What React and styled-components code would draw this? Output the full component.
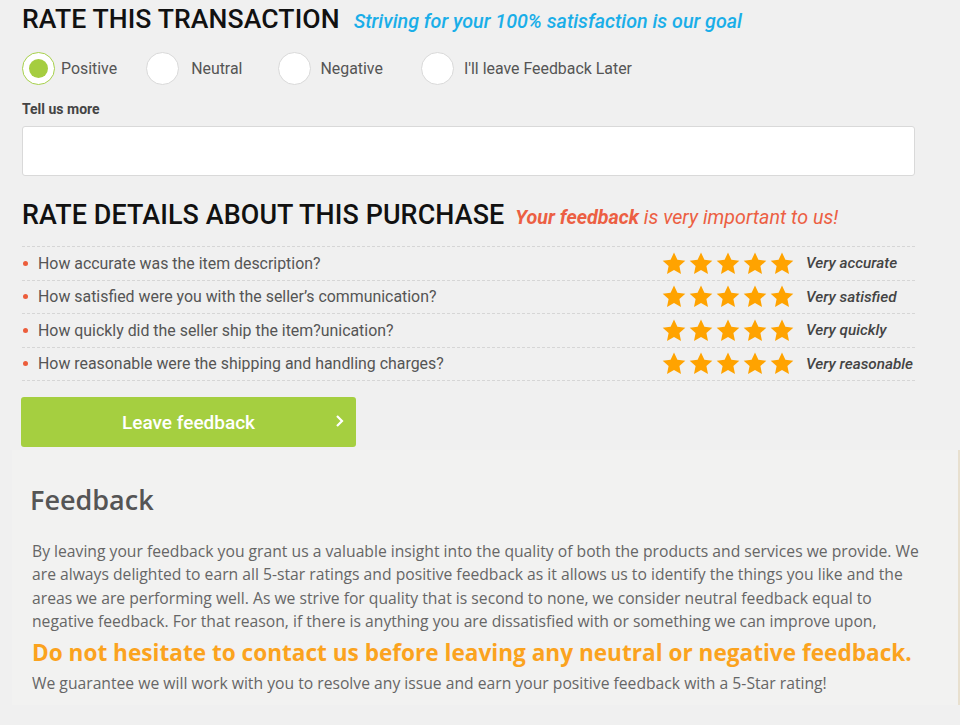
import React from 'react'
import styled, { createGlobalStyle } from 'styled-components'

const Global = createGlobalStyle`
   body {
      margin: 0;
      background: #f0f0f0;
      font-family: Roboto, 'Liberation Sans', sans-serif;
   }
`

const Page = styled.div`
   width: 960px;
   height: 725px;
   overflow: hidden;
`

const Form = styled.section`
   padding: 4px 45px 0 22px;
`

const TitleRow = styled.div`
   display: flex;
   align-items: baseline;
   gap: ${(p) => p.$gap || 14}px;
   margin-bottom: ${(p) => p.$mb || 0}px;
`

const Title = styled.h2`
   margin: 0;
   font-size: ${(p) => p.$size || 26.6}px;
   font-weight: 500;
   color: #111;
   line-height: 30px;
   letter-spacing: 0.1px;
`

const Tagline = styled.span`
   font-size: ${(p) => p.$size || 19.5}px;
   font-style: italic;
   font-weight: 500;
   color: ${(p) => p.$color};
   b {
      font-weight: 700;
   }
   span {
      font-weight: 400;
   }
`

const Radios = styled.div`
   display: flex;
   align-items: center;
   margin-top: 18px;
`

const RadioItem = styled.label`
   display: flex;
   align-items: center;
   gap: ${(p) => p.$gap}px;
   margin-right: ${(p) => p.$mr}px;
   font-size: 15.9px;
   color: #555;
`

const Circle = styled.span`
   width: 31px;
   height: 31px;
   border-radius: 50%;
   background: #fff;
   border: 1px solid ${(p) => (p.$on ? '#a6d04a' : '#d9d9d9')};
   display: flex;
   align-items: center;
   justify-content: center;
   &::after {
      content: '';
      display: ${(p) => (p.$on ? 'block' : 'none')};
      width: 19px;
      height: 19px;
      border-radius: 50%;
      background: #a5cd40;
   }
`

const Label = styled.div`
   margin-top: 16px;
   font-size: 14px;
   font-weight: 700;
   color: #444;
`

const Input = styled.div`
   margin-top: 9px;
   height: 48px;
   background: #fff;
   border: 1px solid #d9d9d9;
   border-radius: 3px;
   margin-bottom: 24px;
`

const List = styled.ul`
   list-style: none;
   margin: 0;
   padding: 0;
   border-top: 1px dashed #d6d6d6;
`

const Row = styled.li`
   display: flex;
   align-items: center;
   height: 32.5px;
   border-bottom: 1px dashed #d6d6d6;
   font-size: 15.9px;
   color: #555;
   &::before {
      content: '';
      width: 5px;
      height: 5px;
      border-radius: 50%;
      background: #ec5d3b;
      margin: 0 11px 0 0;
      transform: translateX(1px);
   }
`

const Question = styled.span`
   flex: 1;
`

const Stars = styled.span`
   display: flex;
   gap: 3px;
   margin-right: 12px;
`

const Verdict = styled.span`
   width: 109px;
   font-style: italic;
   font-weight: 500;
   font-size: 15.3px;
   color: #444;
`

const Button = styled.button`
   margin-top: 16px;
   margin-left: -1px;
   width: 335px;
   height: 50px;
   border: 0;
   border-radius: 3px;
   background: #a5cf40;
   color: #fff;
   font-family: Roboto, sans-serif;
   font-size: 19px;
   font-weight: 500;
   position: relative;
   cursor: pointer;
   svg {
      position: absolute;
      right: 12px;
      top: 16px;
   }
`

const Panel = styled.section`
   margin: 3px 0 0 12px;
   height: 255px;
   background: #f2f2f1;
   border-right: 2px solid #e8e0cf;
   padding: 35px 24px 0 18px;
   font-family: 'Open Sans', sans-serif;
   box-sizing: border-box;
`

const PanelTitle = styled.h3`
   margin: 0 0 25px 0;
   font-size: 27px;
   font-weight: 600;
   color: #555;
   line-height: 30px;
`

const Text = styled.p`
   margin: 0;
   padding-left: 2px;
   font-size: 15.7px;
   line-height: 23.4px;
   color: #666;
`

const Highlight = styled.p`
   margin: 3px 0 4px 2px;
   font-size: 22.6px;
   font-weight: 700;
   color: #fba31e;
   line-height: 31px;
`

const Star = () => (
   <svg width='24' height='23' viewBox='0 0 24 23'>
      <path
         d='M12 0.5l3.4 7.3 7.9 0.9-5.9 5.4 1.6 7.9L12 18l-7 4 1.6-7.9L0.7 8.7l7.9-0.9z'
         fill='#ffa300'
      />
   </svg>
)

const radios = [
   { label: 'Positive', on: true, gap: 6, mr: 29 },
   { label: 'Neutral', gap: 12, mr: 36 },
   { label: 'Negative', gap: 9, mr: 38 },
   { label: "I'll leave Feedback Later", gap: 10, mr: 0 },
]

const details = [
   ['How accurate was the item description?', 'Very accurate'],
   ["How satisfied were you with the seller’s communication?", 'Very satisfied'],
   ['How quickly did the seller ship the item?unication?', 'Very quickly'],
   ['How reasonable were the shipping and handling charges?', 'Very reasonable'],
]

export default function App() {
   return (
      <Page>
         <Global />
         <Form>
            <TitleRow>
               <Title>RATE THIS TRANSACTION</Title>
               <Tagline $color='#1aaee8' $size={19.7}>
                  Striving for your 100% satisfaction is our goal
               </Tagline>
            </TitleRow>
            <Radios>
               {radios.map((r) => (
                  <RadioItem key={r.label} $gap={r.gap} $mr={r.mr}>
                     <Circle $on={r.on} />
                     {r.label}
                  </RadioItem>
               ))}
            </Radios>
            <Label>Tell us more</Label>
            <Input />
            <TitleRow $mb={16} $gap={11}>
               <Title $size={26.9}>RATE DETAILS ABOUT THIS PURCHASE</Title>
               <Tagline $color='#ec5f43' $size={19.7}>
                  <b>Your feedback</b> <span>is very important to us!</span>
               </Tagline>
            </TitleRow>
            <List>
               {details.map(([q, v]) => (
                  <Row key={q}>
                     <Question>{q}</Question>
                     <Stars>
                        <Star />
                        <Star />
                        <Star />
                        <Star />
                        <Star />
                     </Stars>
                     <Verdict>{v}</Verdict>
                  </Row>
               ))}
            </List>
            <Button>
               Leave feedback
               <svg width='10' height='16' viewBox='0 0 10 16'>
                  <path d='M3 3l5 5-5 5' stroke='#fff' strokeWidth='2.2' fill='none' />
               </svg>
            </Button>
         </Form>
         <Panel>
            <PanelTitle>Feedback</PanelTitle>
            <Text>
               By leaving your feedback you grant us a valuable insight into the
               quality of both the products and services we provide. We are always
               delighted to earn all 5-star ratings and positive feedback as it
               allows us to identify the things you like and the areas we are
               performing well. As we strive for quality that is second to none, we
               consider neutral feedback equal to negative feedback. For that
               reason, if there is anything you are dissatisfied with or something
               we can improve upon,
            </Text>
            <Highlight>
               Do not hesitate to contact us before leaving any neutral or negative
               feedback.
            </Highlight>
            <Text>
               We guarantee we will work with you to resolve any issue and earn your
               positive feedback with a 5-Star rating!
            </Text>
         </Panel>
      </Page>
   )
}
